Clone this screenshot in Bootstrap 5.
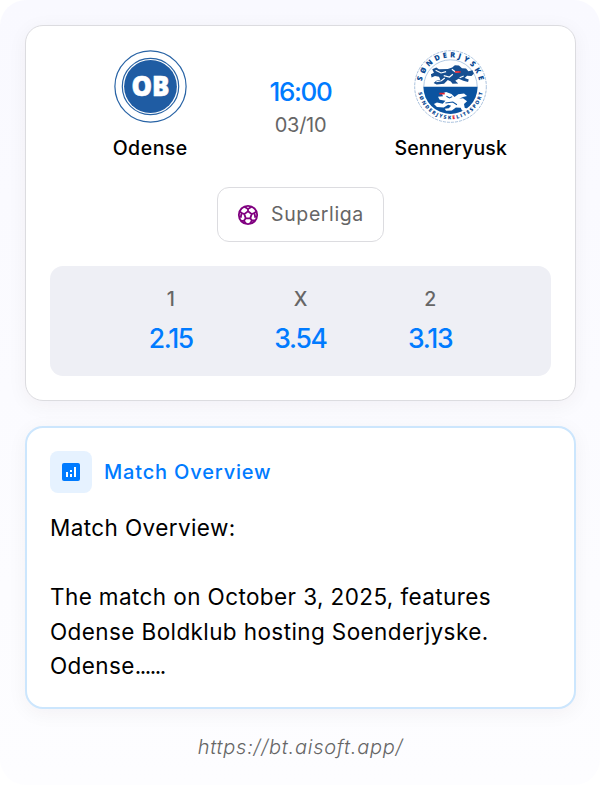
<!DOCTYPE html>
<html lang="en">
<head>
    <meta charset="UTF-8">
    <meta name="viewport" content="width=device-width, initial-scale=1.0">
    <title>Odense - Senneryusk</title>
    <link rel="stylesheet" href="https://cdn.jsdelivr.net/npm/bootstrap@5.3.0/dist/css/bootstrap.min.css">
    <style>
        body {
            font-family: Inter, "Open Sans", sans-serif;
            background-color: #fff;
            color: #000;
        }
        .page {
            height: 785px;
            padding: 25px 24px 0 25px;
            border-radius: 26px;
            background: linear-gradient(180deg, #f9f9ff, #fdfdff);
        }
        .panel {
            border: 1px solid #dcdce0;
            border-radius: 18px;
            background: #fff;
            padding: 24px;
            box-shadow: 0 4px 20px rgba(60, 20, 40, 0.05);
        }
        .match-panel { height: 376px; }
        .overview-panel {
            height: 283px;
            margin-top: 25px;
            border: 2px solid #cce6fd;
            padding: 23px;
        }
        .crest { width: 73px; height: 73px; }
        .team-name {
            font-size: 19.5px;
            line-height: 28px;
            margin-top: 11px;
            margin-bottom: 1px;
            font-weight: 500;
            letter-spacing: 0.15px;
        }
        .kickoff { width: 100px; padding-top: 24px; }
        .kickoff-time { font-size: 26px; line-height: 36px; font-weight: 500; letter-spacing: -1.3px; color: #007bff; }
        .kickoff-date { font-size: 20px; line-height: 30px; letter-spacing: -0.3px; color: #666; }
        .league {
            width: 167px;
            height: 55px;
            margin-top: 24px;
            border: 1px solid #dcdce0;
            border-radius: 12px;
            font-size: 19.5px;
            letter-spacing: 0.6px;
            color: #666;
        }
        .league-name, .overview-title { margin-left: 12px; }
        .odds {
            height: 110px;
            margin-top: 24px;
            padding: 18px 56px 0;
            border-radius: 13px;
            background: #eeeff5;
        }
        .odds-label { font-size: 19.5px; line-height: 30px; font-weight: 500; color: #666; }
        .odds-value { font-size: 26.5px; line-height: 36px; margin-top: 6px; font-weight: 500; letter-spacing: -1.3px; color: #007bff; }
        .overview-icon { width: 42px; height: 42px; border-radius: 8px; background: #e6f2ff; }
        .overview-title { font-size: 20px; font-weight: 500; letter-spacing: 0.83px; color: #007bff; }
        .overview-text { font-size: 22.5px; line-height: 34.6px; margin-top: 18px; letter-spacing: 0.4px; white-space: nowrap; }
        .overview-dots { letter-spacing: -1.5px; }
        .site-link { font-size: 20px; line-height: 30px; margin-top: 23px; letter-spacing: 0.75px; color: #666; font-style: italic; font-weight: 300; }
    </style>
</head>
<body>
    <main class="page">
        <section class="panel match-panel">
            <div class="d-flex text-center">
                <div class="flex-fill w-50">
                    <svg class="crest d-block mx-auto" viewBox="0 0 73 73">
                        <circle cx="36.5" cy="36.500" r="35.6" fill="#fff" stroke="#2863a5" stroke-width="1.2"/>
                        <circle cx="36.5" cy="36.500" r="28.2" fill="#fff" stroke="#2863a5" stroke-width="1.2"/>
                        <circle cx="36.5" cy="36.500" r="26.4" fill="#1f5ca3"/>
                        <text x="36.5" y="46" text-anchor="middle" font-family="Open Sans" font-size="29" font-weight="800" fill="#fff" stroke="#fff" stroke-width="0.6" textLength="38" lengthAdjust="spacingAndGlyphs">OB</text>
                    </svg>
                    <div class="team-name"><span style="letter-spacing: 0.5px">Odense</span></div>
                </div>
                <div class="kickoff flex-shrink-0">
                    <div class="kickoff-time"><span>16:00</span></div>
                    <div class="kickoff-date"><span>03/10</span></div>
                </div>
                <div class="flex-fill w-50">
                    <svg class="crest d-block mx-auto" viewBox="0 0 216 216">
                        <defs>
                            <path id="arcTop" d="M22 108a86 86 0 0 1 172 0"/>
                            <path id="arcBottom" d="M11 108a97 97 0 0 0 194 0"/>
                        </defs>
                        <circle cx="108" cy="108" r="106" fill="#fff" stroke="#7fa3cc" stroke-width="2" stroke-dasharray="9 3"/>
                        <circle cx="108" cy="108" r="79" fill="#fff" stroke="#8fb0d5" stroke-width="2"/>
                        <path d="M28 109h160a80 80 0 0 1-160 0z" fill="#0b53a0"/>
                        <!-- upper lion -->
                        <path d="M54 57l12-5 8 5 26-1 13-4 8-7 12 1 9 8 12 1 7 8 12-3 4 10-7 7-13-1-7 7 12 4-2 8-14-4-14-6-10 6 9 8-17 1-5-7-9-4-11 11-22 2-9-4 8-7 12-3-4-9-12-2-10 4-2-9 9-5z" fill="#174f91"/>
                        <path d="M64 60l16 8 15-4M88 76l17 4 10-8M112 57l12 9 9-2M66 94l15-3 10-8M135 82l12-5" fill="none" stroke="#fff" stroke-width="3.500"/>
                        <path d="M121 65h17" stroke="#e1232f" stroke-width="5"/>
                        <!-- lower lion -->
                        <path d="M157 136l-9-7-17 2-11 8-9-9-16-6-13 5 4 8-15 1 5 9 17 3-8 9-17-4-9 5 9 9 20 1 13-8 9 3-7 7-12 2 4 6 17-1 12-9 14 1 4 8 16 3 5-6-13-5-2-11 9-8-12-9-11 1 11-5z" fill="#fff"/>
                        <path d="M96 137l9 5 8-4M93 157l22-3 12 8" fill="none" stroke="#0b53a0" stroke-width="3"/>
                        <path d="M75 129h16" stroke="#e1232f" stroke-width="5"/>
                        <g font-family="Open Sans" font-weight="800" fill="#0b4a94">
                            <text font-size="22"><textPath href="#arcTop" startOffset="16" textLength="236">SØNDERJYSKE</textPath></text>
                            <text font-size="15"><textPath href="#arcBottom" startOffset="18" textLength="268">SØNDERJYSK<tspan fill="#e1232f">E</tspan>LITESPORT</textPath></text>
                        </g>
                    </svg>
                    <div class="team-name"><span>Senneryusk</span></div>
                </div>
            </div>
            <div class="league d-flex align-items-center justify-content-center mx-auto">
                <svg width="22" height="22" viewBox="0 0 24 24" fill="none" stroke="#800080" stroke-width="2">
                    <circle cx="12" cy="12" r="10"/>
                    <path d="M12 8l4 3-1.5 4.600h-5L8 11zM12 8V5.500M16 11l3-1.200M14.500 15.600l2 2.800M9.500 15.600l-2 2.800M8 11L5 9.800M8 3l4 2.500L16 3M21.500 8l-2.500 1.800 1 5.200M20 18h-3.500L14 21.500M10 21.500L7.500 18.400H4M4 15l1-5.200L2.500 8"/>
                </svg>
                <span class="league-name">Superliga</span>
            </div>
            <div class="odds">
                <div class="row g-0 text-center">
                    <div class="col-4">
                        <div class="odds-label">1</div>
                        <div class="odds-value"><span>2.15</span></div>
                    </div>
                    <div class="col-4">
                        <div class="odds-label">X</div>
                        <div class="odds-value"><span>3.54</span></div>
                    </div>
                    <div class="col-4">
                        <div class="odds-label">2</div>
                        <div class="odds-value"><span>3.13</span></div>
                    </div>
                </div>
            </div>
        </section>

        <section class="panel overview-panel">
            <div class="d-flex align-items-center">
                <div class="overview-icon d-flex align-items-center justify-content-center">
                    <svg width="18" height="18" viewBox="0 0 18 18">
                        <rect width="18" height="18" rx="2" fill="#007bff"/>
                        <path d="M4 9h2v5H4zM8 11h2v3H8zM8 7h2v2H8zM12 4h2v10h-2z" fill="#fff"/>
                    </svg>
                </div>
                <span class="overview-title">Match Overview</span>
            </div>
            <div class="overview-text">
                <span>Match Overview:</span><br>
                <br>
                <span>The match on October 3, 2025, features</span><br>
                <span>Odense Boldklub hosting Soenderjyske.</span><br>
                <span>Odense<span class="overview-dots">......</span></span>
            </div>
        </section>

        <div class="site-link text-center"><span>https://bt.aisoft.app/</span></div>
    </main>
    <script src="https://cdn.jsdelivr.net/npm/bootstrap@5.3.0/dist/js/bootstrap.bundle.min.js"></script>
</body>
</html>
